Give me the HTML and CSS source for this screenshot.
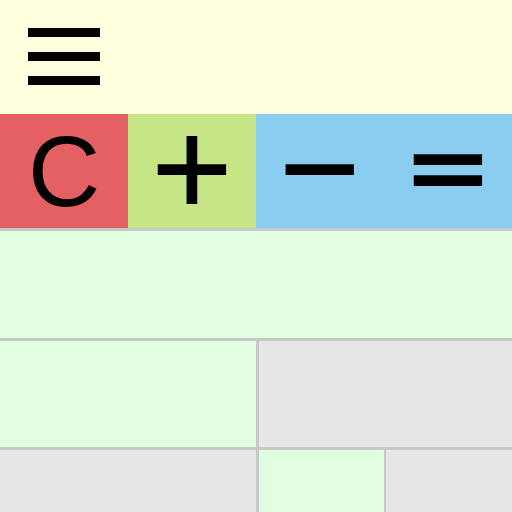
FILE: index.html
```html
<!DOCTYPE html>
<html>
<head>
<meta charset="utf-8">
<link rel="stylesheet" href="styles.css">
</head>
<body>
<header class="topbar">
  <svg class="menu" width="72" height="57" viewBox="0 0 72 57">
    <rect x="0" y="0" width="72" height="9" fill="#000"/>
    <rect x="0" y="24" width="72" height="9" fill="#000"/>
    <rect x="0" y="48" width="72" height="9" fill="#000"/>
  </svg>
</header>
<div class="keys">
  <div class="key key-clear">C</div>
  <div class="key key-plus op">+</div>
  <div class="key key-op op">−</div>
  <div class="key key-op op">=</div>
</div>
<div class="grid">
  <div class="row row-1"><div class="cell on full"></div></div>
  <div class="row row-2"><div class="cell on half"></div><div class="cell off grow"></div></div>
  <div class="row row-3"><div class="cell off half"></div><div class="cell on quarter"></div><div class="cell off grow"></div></div>
</div>
</body>
</html>
```
FILE: styles.css
```css
html, body {
  margin: 0;
  padding: 0;
  width: 512px;
  height: 512px;
  overflow: hidden;
  background: #c8c8c8;
}
.topbar {
  height: 114px;
  background: #ffffe0;
  box-sizing: border-box;
  padding: 28px 0 0 28px;
}
.menu { display: block; }
.keys {
  display: flex;
  height: 114px;
}
.key {
  width: 128px;
  height: 114px;
  text-align: center;
  color: #000;
  font-family: "Liberation Sans", Arial, sans-serif;
  font-size: 100px;
  line-height: 114px;
}
.op {
  font-family: "DejaVu Sans", sans-serif;
  font-size: 106px;
  line-height: 105px;
  -webkit-text-stroke: 2px #000;
}
.key-clear { background: #e46062; }
.key-plus { background: #c5e587; }
.key-op { background: #8bcdf1; }
.grid {
  display: flex;
  flex-direction: column;
  gap: 3px;
  padding-top: 3px;
}
.row { display: flex; gap: 3px; }
.row-1 { height: 107px; }
.row-2 { height: 106px; }
.row-3 { height: 70px; }
.cell { height: 100%; }
.on { background: #e0ffe0; }
.off { background: #e6e6e6; }
.full { flex: 1; }
.half { width: 256px; }
.quarter { width: 125px; margin-right: -1px; }
.grow { flex: 1; }
```
